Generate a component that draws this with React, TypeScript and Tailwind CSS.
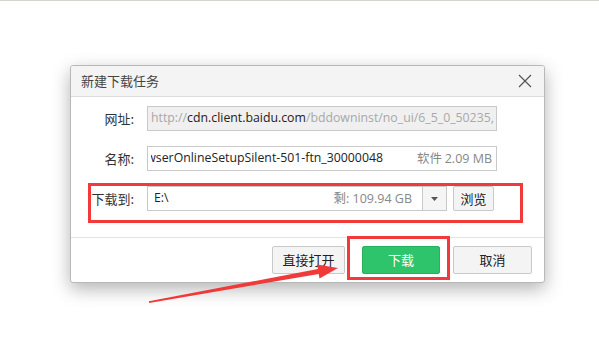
import React from "react";

const cjk = { fontFamily: '"Noto Sans CJK SC", "Noto Sans", sans-serif' };
const latin = { fontFamily: '"Open Sans", "Noto Sans CJK SC", sans-serif' };

export default function App() {
  return (
    <div className="relative w-[599px] h-[338px] overflow-hidden bg-white border-t border-[#d4d4cc]" style={cjk}>
      <div className="pl-[70px] pt-[64px]">
        <div className="w-[475px] h-[218px] bg-white border border-[#b8b8b8] rounded-[3px] shadow-[0_6px_18px_rgba(0,0,0,0.3)] flex flex-col overflow-hidden">
          {/* title */}
          <div className="h-[31px] shrink-0 bg-[#f4f4f4] border-b border-[#dcdcdc] flex items-center justify-between pl-[10px] pr-[12px]">
            <span className="text-[13px] text-[#444]">新建下载任务</span>
            <svg width="14" height="14" viewBox="0 0 14 14">
              <path d="M1 1 L13 13 M13 1 L1 13" stroke="#555" strokeWidth="1.2" fill="none" />
            </svg>
          </div>
          {/* body */}
          <div className="flex-1 flex flex-col pt-[9px] gap-[15px]">
            <div className="flex items-center">
              <div className="w-[64px] text-right text-[13px] text-[#333] pr-[1px]">网址:</div>
              <div className="ml-[12px] w-[350px] h-[25px] border border-[#c9c9c9] bg-[#f0f0f0] flex items-center pl-[3px] overflow-hidden whitespace-nowrap text-[12.3px]" style={latin}>
                <span className="text-[#a8a8a8]">http://</span>
                <span className="text-[#222]">cdn.client.baidu.com</span>
                <span className="text-[#a8a8a8]">/bddowninst/no_ui/6_5_0_50235,</span>
              </div>
            </div>
            <div className="flex items-center">
              <div className="w-[64px] text-right text-[13px] text-[#333] pr-[1px]">名称:</div>
              <div className="ml-[12px] w-[350px] h-[25px] border border-[#c9c9c9] bg-white flex items-center overflow-hidden whitespace-nowrap text-[12.3px]" style={latin}>
                <div className="w-[232px] ml-[3px] overflow-hidden flex justify-end">
                  <span className="text-[#222] shrink-0">wserOnlineSetupSilent-501-ftn_30000048</span>
                </div>
                <span className="ml-auto mr-[4px] text-[#888] text-[12.5px]" style={cjk}>软件 <span style={latin}>2.09 MB</span></span>
              </div>
            </div>
            <div className="flex items-center">
              <div className="w-[64px] text-right text-[13px] text-[#333] pr-[1px]">下载到:</div>
              <div className="ml-[12px] w-[300px] h-[25px] border border-[#c9c9c9] bg-white flex items-center whitespace-nowrap text-[12.3px]" style={latin}>
                <span className="ml-[6px] text-[#222]">E:\</span>
                <span className="ml-auto mr-[10px] text-[#888] text-[12.5px]"><span style={cjk}>剩</span>: 109.94 GB</span>
                <div className="w-[24px] h-full border-l border-[#c9c9c9] bg-[#f5f5f5] flex items-center justify-center">
                  <svg width="7" height="4" viewBox="0 0 7 4"><path d="M0 0 H7 L3.5 4 Z" fill="#555" /></svg>
                </div>
              </div>
              <div className="ml-[6px] w-[41px] h-[25px] border border-[#c9c9c9] rounded-[2px] bg-[#f4f4f4] flex items-center justify-center text-[13px] text-[#222]">浏览</div>
            </div>
          </div>
          {/* footer */}
          <div className="h-[45px] shrink-0 border-t border-[#e4e4e4] flex items-center justify-end pr-[12px]">
            <div className="w-[73px] h-[28px] border border-[#c9c9c9] rounded-[2px] bg-[#f4f4f4] flex items-center justify-center text-[13px] text-[#222]">直接打开</div>
            <div className="ml-[17px] w-[78px] h-[28px] rounded-[2px] bg-[#2ec46b] border border-[#28b25f] flex items-center justify-center text-[13px] text-white">下载</div>
            <div className="ml-[13px] w-[79px] h-[28px] border border-[#c9c9c9] rounded-[2px] bg-[#f4f4f4] flex items-center justify-center text-[13px] text-[#222]">取消</div>
          </div>
        </div>
      </div>
      {/* annotations */}
      <div className="absolute left-[88px] top-[182px] w-[435px] h-[40px] border-[3px] border-[#f23a3a]" />
      <div className="absolute left-[347px] top-[235px] w-[103px] h-[44px] border-[3px] border-[#f23a3a]" />
      <svg className="absolute left-0 top-0" width="599" height="338" viewBox="0 0 599 338">
        <polygon points="148.9,300.3 317.9,268 317.1,263.6 338,267 319.5,277.4 318.7,273 149.1,301.9" fill="#f03a3a" />
      </svg>
    </div>
  );
}
